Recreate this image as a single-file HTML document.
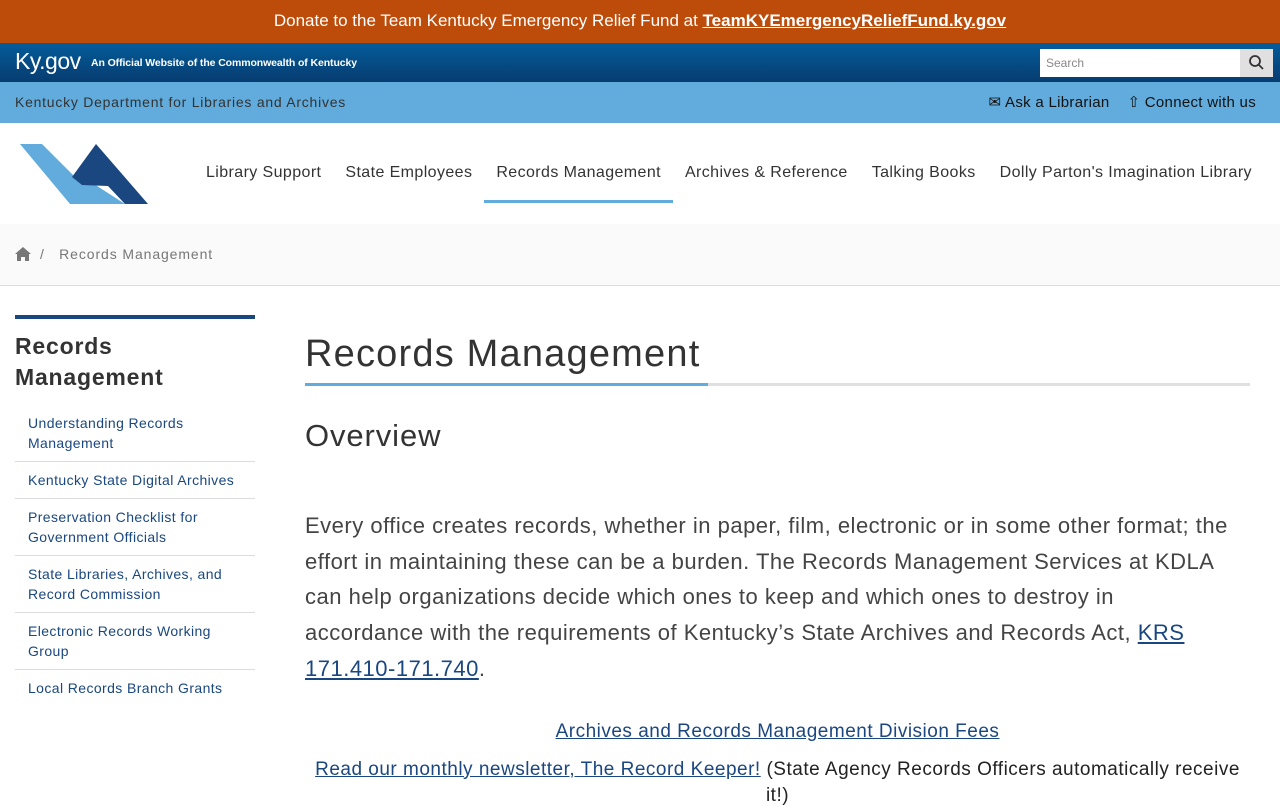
<!DOCTYPE html>
<html><head><meta charset="utf-8"><style>
*{box-sizing:border-box;margin:0;padding:0}
body{width:1280px;height:800px;overflow:hidden;font-family:"Liberation Sans",sans-serif;background:#fff;color:#333}
.donate{height:43px;background:#bd4b0a;color:#fff;text-align:center;font-size:17px;line-height:42px}
.donate a{color:#fff;font-weight:bold;text-decoration:underline}
.kybar{height:39px;background:linear-gradient(#045c9a,#063c70);position:relative;color:#fff}
.kylogo{position:absolute;left:15px;top:5px;font-size:23px;letter-spacing:-.5px}
.kytag{position:absolute;left:91px;top:14px;font-size:10.5px;font-weight:bold;letter-spacing:-.1px}
.search{position:absolute;left:1040px;top:6px;width:233px;height:28px;background:#fff}
.search span{position:absolute;left:6px;top:7px;font-size:12px;color:#888}
.search b{position:absolute;right:0;top:0;width:33px;height:28px;background:#e0e0e0}
.dept{height:41px;background:#62acdd;position:relative;font-size:14px;color:#333;letter-spacing:.75px}
.dept .l{position:absolute;left:15px;top:12px}
.dept .r{position:absolute;right:24px;top:11px;font-size:15px;color:#111;letter-spacing:.3px}
.nav{height:101px;position:relative;box-shadow:0 2px 4px rgba(0,0,0,.08)}
.nav ul{list-style:none;position:absolute;left:194px;top:0;display:flex}
.nav li{padding:0 12px;font-size:16px;line-height:100px;color:#333;position:relative;letter-spacing:.4px}
.nav li.a:after{content:"";position:absolute;left:0;right:0;bottom:20px;height:3px;background:#62acdd}
.crumb{height:62px;background:#fafafa;border-bottom:1px solid #ddd;position:relative;font-size:14px;color:#777;letter-spacing:.9px}
.side{position:absolute;left:15px;top:315px;width:240px}
.side .bar{height:4px;background:#1a4780}
.side h2{font-size:23px;line-height:31px;color:#333;margin-top:12px;margin-bottom:12px;letter-spacing:.8px}
.side a{display:block;color:#1a4780;font-size:14px;line-height:20px;padding:8px 13px 8px;border-bottom:1px solid #ddd;text-decoration:none;letter-spacing:.4px;white-space:nowrap}
.main{position:absolute;left:305px;top:330px;width:945px}
h1{font-size:38px;font-weight:normal;color:#333;line-height:48px;border-bottom:3px solid #e0e0e0;position:relative;padding-bottom:5px;letter-spacing:1.2px}
h1:after{content:"";position:absolute;left:0;bottom:-3px;width:403px;height:3px;background:#62acdd}
h3{font-size:31px;font-weight:normal;margin-top:32px;color:#333;letter-spacing:.9px}
p{font-size:22px;line-height:35.7px;color:#444;margin-top:54px;letter-spacing:.5px;white-space:nowrap}
a.u{color:#1a4780;text-decoration:underline}
.c{text-align:center;font-size:19px;color:#222;letter-spacing:.5px;line-height:26px}
</style></head><body>
<div class="donate">Donate to the Team Kentucky Emergency Relief Fund at <a>TeamKYEmergencyReliefFund.ky.gov</a></div>
<div class="kybar"><span class="kylogo">Ky.gov</span><span class="kytag">An Official Website of the Commonwealth of Kentucky</span>
<div class="search"><span>Search</span><b><svg width="33" height="28"><circle cx="15" cy="12" r="5" stroke="#333" stroke-width="1.8" fill="none"/><path d="M19 16l4 4" stroke="#333" stroke-width="1.8"/></svg></b></div></div>
<div class="dept"><span class="l">Kentucky Department for Libraries and Archives</span>
<span class="r">✉ Ask a Librarian &nbsp;&nbsp; ⇧ Connect with us</span></div>
<div class="nav"><svg style="position:absolute;left:0;top:0" width="160" height="100">
<polygon points="20,21 42,21 82,61 94,61 125,81 70,81" fill="#62acdd"/>
<polygon points="96,21 148,81 125,81 108,63 82,62 72,54" fill="#1a4780"/>
</svg>
<ul><li>Library Support</li><li>State Employees</li><li class="a">Records Management</li><li>Archives &amp; Reference</li><li>Talking Books</li><li>Dolly Parton's Imagination Library</li></ul></div>
<div class="crumb"><svg style="position:absolute;left:15px;top:23px" width="16" height="14"><path d="M8 0L0 7h2v7h4v-4h4v4h4V7h2z" fill="#777"/></svg><span style="position:absolute;left:40px;top:22px">/ &nbsp;&nbsp;Records Management</span></div>
<div class="side"><div class="bar"></div><h2>Records<br>Management</h2>
<a>Understanding Records<br>Management</a><a>Kentucky State Digital Archives</a><a>Preservation Checklist for<br>Government Officials</a><a>State Libraries, Archives, and<br>Record Commission</a><a>Electronic Records Working<br>Group</a><a style="border:0">Local Records Branch Grants</a></div>
<div class="main"><h1>Records Management</h1><h3>Overview</h3>
<p>Every office creates records, whether in paper, film, electronic or in some other format; the<br>effort in maintaining these can be a burden. The Records Management Services at KDLA<br>can help organizations decide which ones to keep and which ones to destroy in<br>accordance with the requirements of Kentucky’s State Archives and Records Act, <a class="u">KRS</a><br><a class="u">171.410-171.740</a>.</p>
<div class="c" style="margin-top:32px"><a class="u">Archives and Records Management Division Fees</a></div>
<div class="c" style="margin-top:12px"><a class="u">Read our monthly newsletter, The Record Keeper!</a> (State Agency Records Officers automatically receive<br>it!)</div>
</div>
</body></html>
